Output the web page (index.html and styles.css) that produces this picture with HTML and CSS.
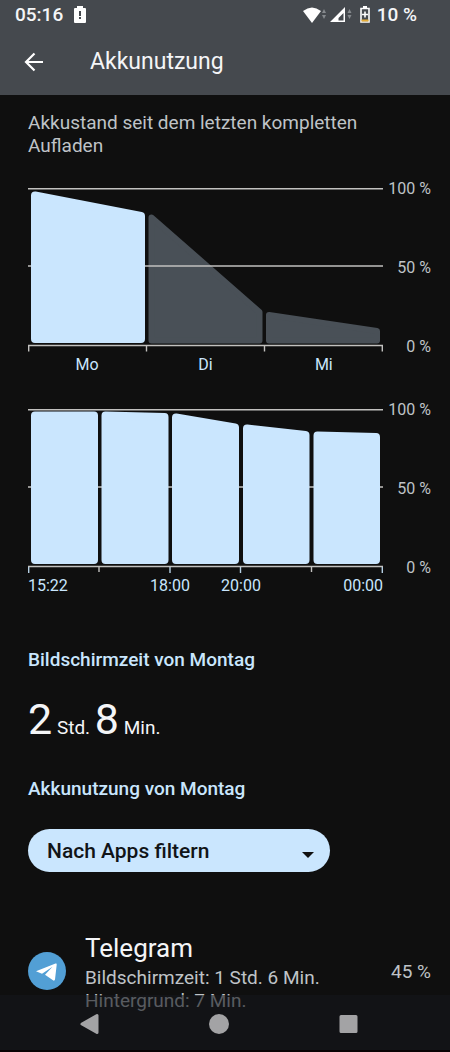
FILE: index.html
```html
<!DOCTYPE html>
<html lang="de">
<head>
<meta charset="utf-8">
<meta name="viewport" content="width=device-width, initial-scale=1">
<title>Akkunutzung</title>
<link rel="stylesheet" href="styles.css">
</head>
<body>
<header class="top">
  <div class="status">
    <span class="status-group">
      <span>05:16</span>
      <svg width="12" height="18" viewBox="0 0 12 18" aria-hidden="true"><path fill="#fff" d="M3 2V0h6v2h2q1 0 1 1v13q0 1-1 1H1q-1 0-1-1V3q0-1 1-1z"/><path fill="#45494e" d="M5 5h2v5H5zM5 11h2v2H5z"/></svg>
    </span>
    <span class="status-group status-right">
      <svg width="50" height="18" viewBox="0 0 50 18" aria-hidden="true">
        <path fill="#fff" d="M0 5Q9-2 18 5L9 17z"/>
        <path fill="#85898d" d="M21 3l2 4h-4zM21 13l2-4h-4zM46.500 3l2 4h-4zM46.500 13l2-4h-4z"/>
        <path fill="#fff" fill-rule="evenodd" d="M42 1v15H27zM40.500 7l-5 5v2.500h5z"/>
      </svg>
      <svg width="10" height="18" viewBox="0 0 10 18" aria-hidden="true"><path fill="#fff" d="M3 0h4v2H3z"/><path fill="none" stroke="#fff" stroke-width="1.600" d="M1 2.500h8v13.500H1z"/><path fill="#fff" d="M4.200 5.500h1.600v2.200H8v1.600H5.800v2.200H4.200V9.300H2V7.700h2.200z"/><path fill="#e5ad37" d="M1.500 13.500h7v2h-7z"/></svg>
      <span>10 %</span>
    </span>
  </div>
  <div class="appbar">
    <button class="back" aria-label="Zurück"><svg width="20" height="20" viewBox="0 0 20 20" aria-hidden="true"><path fill="none" stroke="#fff" stroke-width="2.200" d="M19 10H2M10.500 1.500L2 10l8.500 8.500"/></svg></button>
    <h1 class="title">Akkunutzung</h1>
  </div>
</header>

<main class="content">
  <p class="intro">Akkustand seit dem letzten kompletten Aufladen</p>

  <section class="chart" aria-label="Akkustand nach Tagen">
    <svg class="plot" viewBox="0 0 355 164" aria-hidden="true">
      <path class="grid-line" d="M0 .7h355"/>
      <g class="bar-muted">
        <path d="M123.500 29.500L231.500 124V152.500h-108z"/>
        <path d="M241 127L349 143V152.500H241z"/>
      </g>
      <path class="grid-line" d="M0 78h355"/>
      <path class="bar" d="M7 7.500L113 28V151H7z"/>
      <path class="grid-line" d="M.7 163.500v-6h353.600v6M118.500 158v5.500M236.500 158v5.500"/>
    </svg>
    <div class="scale"><span>100 %</span><span>50 %</span><span>0 %</span></div>
    <div class="labels days"><span>Mo</span><span>Di</span><span>Mi</span></div>
  </section>

  <section class="chart" aria-label="Akkustand nach Stunden">
    <svg class="plot" viewBox="0 0 355 164" aria-hidden="true">
      <path class="grid-line" d="M0 .7h355M0 78h355"/>
      <g class="bar">
        <path d="M7 6.500h59V151H7z"/>
        <path d="M77.500 6.500L136.500 8V151h-59z"/>
        <path d="M148 8.500L207 18.500V151H148z"/>
        <path d="M219 19.500L277.500 26V151H219z"/>
        <path d="M289.500 26.500L348 28V151h-58.500z"/>
      </g>
      <path class="grid-line" d="M0 157.500h355M71 158v5M283.500 158v5"/>
      <path class="tick" d="M.7 158v6M142 158v6M212.500 158v6M354.300 158v6"/>
    </svg>
    <div class="scale"><span>100 %</span><span>50 %</span><span>0 %</span></div>
    <div class="labels hours"><span>15:22</span><span>18:00</span><span>20:00</span><span>00:00</span></div>
  </section>

  <h2 class="heading">Bildschirmzeit von Montag</h2>
  <p class="screen-time"><b>2</b> Std. <b>8</b> Min.</p>
  <h2 class="heading">Akkunutzung von Montag</h2>

  <div class="filter">
    <select class="filter-select" aria-label="Akkunutzung filtern"><option>Nach Apps filtern</option></select>
    <svg class="caret" width="12" height="6" viewBox="0 0 12 6" aria-hidden="true"><path fill="#111" d="M0 0h12L6 6z"/></svg>
  </div>

  <article class="app">
    <svg class="app-icon" viewBox="0 0 38 38" aria-hidden="true"><circle cx="19" cy="19" r="19" fill="#529fd5"/><path fill="#fff" d="M8 19.300L27.500 11.500q1.500-.5 1.200 1.200L27 27.500q-.5 1.800-2 .8L17 22.800 24.500 14.800 14 21.800z"/></svg>
    <div class="app-text">
      <h3 class="app-name">Telegram</h3>
      <p>Bildschirmzeit: 1 Std. 6 Min.</p>
      <p>Hintergrund: 7 Min.</p>
    </div>
    <span class="app-percent">45 %</span>
  </article>
</main>

<nav class="system-nav" aria-label="Systemnavigation">
  <button aria-label="Zurück"><svg width="20" height="22" viewBox="0 0 20 22" aria-hidden="true"><path d="M2 11L17 2.500v17z" stroke-width="3"/></svg></button>
  <button aria-label="Startbildschirm"><svg width="20" height="22" viewBox="0 0 20 22" aria-hidden="true"><circle cx="10" cy="11" r="10" stroke="none"/></svg></button>
  <button aria-label="Letzte Apps"><svg width="20" height="22" viewBox="0 0 20 22" aria-hidden="true"><path d="M3 3.500h15v15H3z" stroke-width="3"/></svg></button>
</nav>
</body>
</html>
```

FILE: styles.css
```css
* { box-sizing: border-box; }
body {
  margin: 0;
  background: #0f0f0f;
  color: #bfc3c7;
  font-family: Roboto, "Liberation Sans", sans-serif;
  font-size: 19px;
  line-height: 23px;
}
h1, h2, h3, p { margin: 0; font-weight: 400; }
button { border: 0; padding: 0; background: none; display: flex; }
svg { display: block; }

.top { background: #45494e; color: #f4f5f7; padding-bottom: 17px; }
.status {
  display: flex;
  justify-content: space-between;
  padding: 3px 33px 0 15px;
  font-weight: 500;
}
.status-group { display: flex; align-items: center; gap: 11px; }
.status-right { gap: 7px; }
.appbar { display: flex; align-items: center; gap: 46px; padding: 20px 24px 0; }
.title { font-size: 23px; line-height: 32px; }

.content { padding: 16px 19px 0 28px; }
.intro { margin-right: 48px; }

.chart {
  display: grid;
  grid-template-columns: minmax(0, 1fr) 48px;
  font-size: 16px;
  line-height: 20px;
  margin-top: 22px;
}
.chart + .chart { margin-top: 25px; }
.plot { width: 100%; margin-top: 9px; }
.scale { display: flex; flex-direction: column; justify-content: space-between; text-align: right; grid-row: 1; grid-column: 2; margin-bottom: -5px; }
.labels { display: grid; color: #c9e6fd; margin-top: 3px; }
.days { grid-template-columns: repeat(3, 1fr); text-align: center; }
.hours { grid-template-columns: repeat(10, minmax(0, 1fr)); text-align: center; }
.hours span { grid-column: span 2; }
.hours span:nth-child(1) { text-align: left; }
.hours span:nth-child(2) { grid-column: 4 / span 2; }
.hours span:nth-child(4) { grid-column: 9 / span 2; text-align: right; }
.grid-line { fill: none; stroke: #c2c1bf; stroke-width: 1.4; }
.tick { stroke: #b5cfe3; stroke-width: 1.4; }
.bar { fill: #cae6fe; stroke: #cae6fe; stroke-width: 8; stroke-linejoin: round; }
.bar-muted { fill: #495057; stroke: #495057; stroke-width: 6; stroke-linejoin: round; }

.heading { color: #c9e6fd; font-size: 19px; font-weight: 500; line-height: 24px; }
.chart + .heading { margin-top: 52px; }
.screen-time { color: #f4f5f7; line-height: 52px; margin: 25px 0 23px; }
.screen-time b { font-size: 43px; font-weight: 400; line-height: 44px; }

.filter { display: flex; align-items: center; width: 75%; height: 43px; margin-top: 28px; padding-right: 16px; border-radius: 22px; background: #cae6fe; }
.filter-select { appearance: none; flex: 1; height: 43px; border: 0; padding: 0 0 0 19px; background: transparent; color: #111417; font: 500 21px/28px Roboto, "Liberation Sans", sans-serif; }
.caret { margin-top: 8px; }

.app { display: flex; align-items: center; margin-top: 58px; }
.app-icon { width: 38px; height: 38px; }
.app-text { margin-left: 19px; flex: 1; }
.app-name { color: #f4f5f7; font-size: 26px; line-height: 36px; }

.system-nav {
  position: fixed;
  inset: auto 0 0;
  height: 57px;
  display: flex;
  justify-content: space-between;
  align-items: center;
  padding: 2px 92px 0 80px;
  background: rgba(20, 22, 26, .6);
  border-bottom: 2px solid #090304;
}
.system-nav svg { fill: #a3a3a5; stroke: #a3a3a5; stroke-linejoin: round; }
```
